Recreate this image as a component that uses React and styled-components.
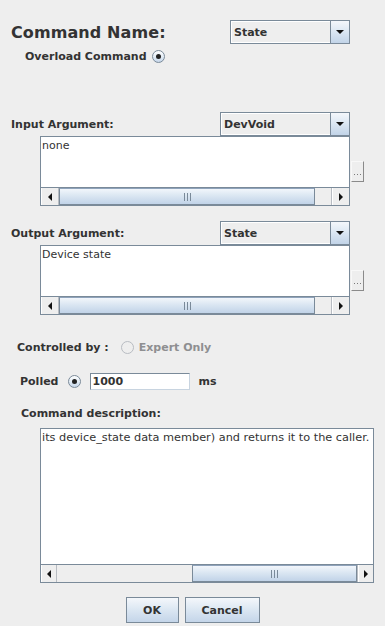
import React from 'react'
import styled, { createGlobalStyle } from 'styled-components'

const GlobalStyle = createGlobalStyle`
  html, body {
    margin: 0;
    padding: 0;
    background: #eeeeee;
  }
  body {
    font-family: "DejaVu Sans", Verdana, sans-serif;
    color: #333333;
  }
`

const Dialog = styled.div`
  width: 385px;
  height: 626px;
  display: flex;
  flex-direction: column;
  background: #eeeeee;
  overflow: hidden;
`

const HeaderRow = styled.div`
  display: grid;
  grid-template-columns: 219px 120px;
  align-items: center;
  height: 24px;
  margin-top: 20px;
  padding-left: 11px;
`

const Title = styled.div`
  font-size: 16px;
  font-weight: bold;
  letter-spacing: 0.1px;
`

const Label = styled.span`
  font-size: 11px;
  font-weight: bold;
  color: ${p => (p.$disabled ? '#8e8f91' : '#333333')};
  white-space: nowrap;
`

const RadioRow = styled.div`
  display: flex;
  align-items: center;
  gap: ${p => p.$gap}px;
  height: 20px;
  margin-top: ${p => p.$top}px;
  padding-left: ${p => p.$left}px;
`

const Radio = styled.span`
  box-sizing: border-box;
  width: 13px;
  height: 13px;
  border-radius: 50%;
  border: 1px solid ${p => (p.$disabled ? '#b8bcc2' : '#7a8a99')};
  background: ${p => (p.$disabled ? '#eeeeee' : 'linear-gradient(#ffffff, #dde8f3 60%, #c6d6ea)')};
  display: inline-flex;
  align-items: center;
  justify-content: center;
  flex-shrink: 0;

  &::after {
    content: '';
    width: 5px;
    height: 5px;
    border-radius: 50%;
    background: #222222;
    display: ${p => (p.$checked ? 'block' : 'none')};
  }
`

const ComboBox = styled.div`
  box-sizing: border-box;
  width: ${p => p.$width}px;
  height: 24px;
  display: flex;
  border: 1px solid #7a8a99;
  background: #eeeeee;
`

const ComboValue = styled.div`
  flex: 1;
  display: flex;
  align-items: center;
  padding-left: 2px;
  font-size: 11px;
  font-weight: bold;
  border: 1px solid #ffffff;
  border-right: none;
`

const ComboArrow = styled.div`
  width: 18px;
  border-left: 1px solid #7a8a99;
  background: linear-gradient(#f4f7fb, #dde8f3 45%, #c2d4e8);
  display: flex;
  align-items: center;
  justify-content: center;

  &::after {
    content: '';
    border-left: 4px solid transparent;
    border-right: 4px solid transparent;
    border-top: 4px solid #111111;
  }
`

const Combo = ({ value, width }) => (
  <ComboBox $width={width}>
    <ComboValue>{value}</ComboValue>
    <ComboArrow />
  </ComboBox>
)

const ArgHeader = styled.div`
  display: grid;
  grid-template-columns: 209px 130px;
  align-items: center;
  height: 24px;
  margin-top: ${p => p.$top}px;
  padding-left: 11px;
`

const ArgBody = styled.div`
  display: flex;
  align-items: center;
  gap: 1px;
  padding-left: 40px;
`

const ScrollPane = styled.div`
  box-sizing: border-box;
  width: ${p => p.$width}px;
  height: ${p => p.$height}px;
  border: 1px solid #7a8a99;
  display: flex;
  flex-direction: column;
  background: #ffffff;
  margin-top: ${p => p.$top || 0}px;
`

const PaneText = styled.div`
  flex: 1;
  padding: 2px 1px 0;
  font-size: ${p => p.$size || 11}px;
  line-height: 14px;
  white-space: nowrap;
  overflow: hidden;
  color: #333333;
`

const ScrollBar = styled.div`
  height: 17px;
  display: flex;
  border-top: 1px solid #7a8a99;
  background: #eeeeee;
`

const ScrollButton = styled.div`
  width: 16px;
  display: flex;
  align-items: center;
  justify-content: center;
  background: #eeeeee;
  border-left: 1px solid #ffffff;

  &::after {
    content: '';
    border-top: 4px solid transparent;
    border-bottom: 4px solid transparent;
    ${p => (p.$dir === 'left' ? 'border-right: 4px solid #111111;' : 'border-left: 4px solid #111111;')}
  }
`

const Track = styled.div`
  flex: 1;
  display: flex;
  border-left: 1px solid #b8bcc2;
  border-right: 1px solid #b8bcc2;
`

const Thumb = styled.div`
  box-sizing: border-box;
  margin-left: ${p => p.$offset}px;
  width: ${p => p.$size}px;
  border: 1px solid #7a8a99;
  border-top-color: #8fa3bb;
  background: linear-gradient(#f2f6fb, #dde8f3 40%, #c1d3e8);
  display: flex;
  align-items: center;
  justify-content: center;
  gap: 2px;
`

const Grip = styled.span`
  width: 1px;
  height: 8px;
  background: #7a8a99;
`

const HScroll = ({ offset, size }) => (
  <ScrollBar>
    <ScrollButton $dir="left" />
    <Track>
      <Thumb $offset={offset} $size={size}>
        <Grip />
        <Grip />
        <Grip />
      </Thumb>
    </Track>
    <ScrollButton $dir="right" />
  </ScrollBar>
)

const DotsButton = styled.div`
  box-sizing: border-box;
  width: 13px;
  height: 21px;
  border: 1px solid;
  border-color: #f8f8f8 #8a8a8a #8a8a8a #f8f8f8;
  display: flex;
  align-items: flex-end;
  justify-content: center;
  gap: 2px;
  padding-bottom: 6px;
`

const Dot = styled.span`
  width: 1px;
  height: 1px;
  background: #7a7a7a;
`

const TextField = styled.div`
  box-sizing: border-box;
  width: 100px;
  height: 17px;
  border: 1px solid #7a8a99;
  border-right-color: #c8d4e0;
  border-bottom-color: #c8d4e0;
  background: #ffffff;
  font-size: 11px;
  font-weight: bold;
  line-height: 15px;
  padding-left: 2px;
`

const DescLabel = styled.div`
  height: 16px;
  display: flex;
  align-items: center;
  margin-top: 14px;
  padding-left: 21px;
`

const DescBody = styled.div`
  padding-left: 40px;
`

const ButtonBar = styled.div`
  display: flex;
  justify-content: center;
  gap: 6px;
  margin-top: 14px;
`

const Button = styled.button`
  box-sizing: border-box;
  width: ${p => p.$width}px;
  height: 26px;
  border: 1px solid #7a8a99;
  border-radius: 0;
  background: linear-gradient(#f4f7fb, #dde8f3 45%, #c4d5e9);
  font-family: "DejaVu Sans", Verdana, sans-serif;
  font-size: 11px;
  font-weight: bold;
  color: #333333;
  padding: 0;
`

const Argument = ({ label, type, text, top }) => (
  <>
    <ArgHeader $top={top}>
      <Label>{label}</Label>
      <Combo value={type} width={130} />
    </ArgHeader>
    <ArgBody>
      <ScrollPane $width={310} $height={70}>
        <PaneText>{text}</PaneText>
        <HScroll offset={0} size={256} />
      </ScrollPane>
      <DotsButton>
        <Dot />
        <Dot />
        <Dot />
      </DotsButton>
    </ArgBody>
  </>
)

export default function App() {
  return (
    <Dialog>
      <GlobalStyle />
      <HeaderRow>
        <Title>Command Name:</Title>
        <Combo value="State" width={120} />
      </HeaderRow>
      <RadioRow $top={2} $left={25} $gap={5}>
        <Label>Overload Command</Label>
        <Radio $checked />
      </RadioRow>

      <Argument label="Input Argument:" type="DevVoid" text="none" top={46} />
      <Argument label="Output Argument:" type="State" text="Device state" top={15} />

      <RadioRow $top={22} $left={17} $gap={12}>
        <Label>Controlled by :</Label>
        <Radio $disabled />
        <Label $disabled style={{ marginLeft: -7 }}>Expert Only</Label>
      </RadioRow>
      <RadioRow $top={14} $left={20} $gap={9}>
        <Label>Polled</Label>
        <Radio $checked />
        <TextField>1000</TextField>
        <Label>ms</Label>
      </RadioRow>

      <DescLabel>
        <Label>Command description:</Label>
      </DescLabel>
      <DescBody>
        <ScrollPane $width={334} $height={155} $top={7}>
          <PaneText $size={11.3}>its device_state data member) and returns it to the caller.</PaneText>
          <HScroll offset={135} size={165} />
        </ScrollPane>
      </DescBody>

      <ButtonBar>
        <Button $width={53}>OK</Button>
        <Button $width={75}>Cancel</Button>
      </ButtonBar>
    </Dialog>
  )
}
